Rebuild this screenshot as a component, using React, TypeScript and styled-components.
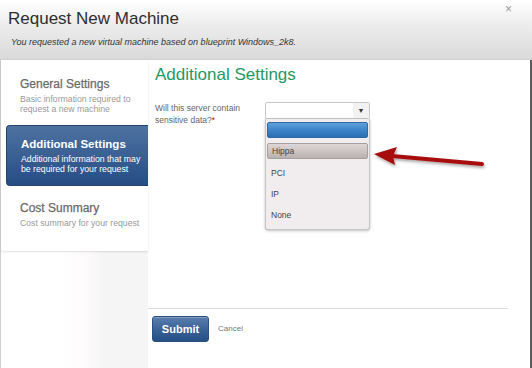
import React from "react";
import styled, { createGlobalStyle } from "styled-components";

const Global = createGlobalStyle`
  html, body { margin: 0; padding: 0; background: #fff; }
  body { font-family: "Liberation Sans", Arial, sans-serif; }
`;

const Dialog = styled.div`
  width: 532px;
  height: 368px;
  display: flex;
  flex-direction: column;
  overflow: hidden;
  background: #fff;
`;

const Header = styled.div`
  position: relative;
  height: 60px;
  box-sizing: border-box;
  padding: 8px 0 0 8px;
  background: linear-gradient(#ffffff 0%, #ececec 45%, #d9d9d9 100%);
  border-bottom: 1px solid #d0d0d0;
`;

const Title = styled.div`
  font-size: 17px;
  color: #2e2e2e;
  line-height: 22px;
`;

const Subtitle = styled.div`
  margin-top: 7px;
  margin-left: 3px;
  font-size: 9px;
  font-style: italic;
  color: #333;
`;

const Close = styled.div`
  position: absolute;
  right: 20px;
  top: 2px;
  font-size: 12px;
  color: #999;
`;

const Body = styled.div`
  flex: 1;
  display: flex;
  border-left: 1px solid #cfcfcf;
  border-right: 2px solid #5a5a5a;
`;

const Sidebar = styled.div`
  width: 147px;
  display: flex;
  flex-direction: column;
  background: linear-gradient(90deg, #ffffff 40%, #fdfafb 60%, #f5f5f5 70%);
  padding-bottom: 17px;
`;

const Steps = styled.div`
  background: #fff;
  padding-top: 2px;
  box-shadow: 0 1px 2px rgba(0, 0, 0, 0.12);
  border-bottom-left-radius: 3px;
  padding-bottom: 2px;
`;

const Step = styled.div<{ $active?: boolean }>`
  box-sizing: border-box;
  margin-left: ${(p) => (p.$active ? "5px" : "0")};
  padding: ${(p) => (p.$active ? "11px 4px 0 14px" : "15px 4px 0 19px")};
  height: ${(p) => (p.$active ? "61px" : "63px")};
  border-radius: ${(p) => (p.$active ? "4px 0 0 4px" : "0")};
  background: ${(p) =>
    p.$active ? "linear-gradient(#4d72a0 0%, #3a6094 50%, #244d85 100%)" : "transparent"};
  border: ${(p) => (p.$active ? "1px solid #22446f" : "none")};
  border-right: none;
  color: ${(p) => (p.$active ? "#fff" : "#6a6a6a")};
`;

const StepTitle = styled.div<{ $active?: boolean }>`
  font-size: ${(p) => (p.$active ? "11.5px" : "12px")};
  font-weight: ${(p) => (p.$active ? "bold" : "normal")};
  line-height: 15px;
  margin-bottom: 2px;
  -webkit-text-stroke: ${(p) => (p.$active ? "0" : "0.25px")};
`;

const StepDesc = styled.div<{ $active?: boolean }>`
  font-size: 8.7px;
  line-height: 10px;
  color: ${(p) => (p.$active ? "#fff" : "#999")};
`;

const Main = styled.div`
  flex: 1;
  display: flex;
  flex-direction: column;
  position: relative;
`;

const Content = styled.div`
  flex: 1;
  padding: 5px 0 0 7px;
`;

const SectionTitle = styled.div`
  font-size: 17px;
  color: #1f9862;
  line-height: 20px;
`;

const FieldRow = styled.div`
  display: flex;
  margin-top: 17px;
`;

const Label = styled.div`
  width: 104px;
  margin-right: 6px;
  font-size: 8.5px;
  line-height: 12px;
  color: #666;
`;

const Req = styled.span`
  color: #d00;
`;

const SelectWrap = styled.div`
  position: relative;
  margin-top: 0;
`;

const SelectBox = styled.div`
  width: 105px;
  height: 17px;
  box-sizing: border-box;
  border: 1px solid #c8c8c8;
  border-radius: 2px;
  background: #fff;
  display: flex;
  justify-content: flex-end;
`;

const Arrow = styled.div`
  width: 16px;
  background: #f2f2f2;
  font-size: 7px;
  color: #333;
  display: flex;
  align-items: center;
  justify-content: center;
`;

const Menu = styled.div`
  position: absolute;
  left: 0;
  top: 17px;
  width: 105px;
  box-sizing: border-box;
  height: 111px;
  background: #f1edef;
  border: 1px solid #c5c5c5;
  border-top: none;
  border-radius: 0 0 3px 3px;
  box-shadow: 0 1px 3px rgba(0, 0, 0, 0.25);
  padding: 3px 1px 0 1px;
`;

const Option = styled.div<{ $kind?: "blue" | "hover" }>`
  box-sizing: border-box;
  height: ${(p) => (p.$kind ? "16px" : "21px")};
  margin-bottom: ${(p) => (p.$kind === "blue" ? "5px" : p.$kind === "hover" ? "3px" : "0")};
  font-size: 8.5px;
  color: #444;
  padding-left: 4px;
  display: flex;
  align-items: center;
  border-radius: 2px;
  background: ${(p) =>
    p.$kind === "blue"
      ? "linear-gradient(#5fa0da 0%, #3a82c6 55%, #2a6fb2 100%)"
      : p.$kind === "hover"
      ? "linear-gradient(#ddd7d5 0%, #c9c1bf 60%, #b9b1af 100%)"
      : "transparent"};
  border: ${(p) =>
    p.$kind === "blue" ? "1px solid #2f6aa8" : p.$kind === "hover" ? "1px solid #a8a09e" : "none"};
`;

const Pointer = styled.svg`
  position: absolute;
  left: 220px;
  top: 79px;
`;

const Divider = styled.div`
  height: 1px;
  background: #dcdcdc;
  margin-right: 22px;
`;

const Footer = styled.div`
  height: 59px;
  display: flex;
  align-items: flex-start;
  padding: 7px 0 0 4px;
  gap: 9px;
  box-sizing: border-box;
`;

const Submit = styled.button`
  width: 57px;
  height: 26px;
  border: 1px solid #2a4f80;
  border-radius: 3px;
  background: linear-gradient(#5a7fae 0%, #3d6398 50%, #244e86 100%);
  color: #fff;
  font-family: "Liberation Sans", Arial, sans-serif;
  font-weight: bold;
  font-size: 11px;
  padding: 0;
  box-shadow: inset 0 1px 0 rgba(255, 255, 255, 0.25);
`;

const Cancel = styled.span`
  font-size: 8px;
  color: #777;
  line-height: 26px;
`;

export default function App() {
  return (
    <>
      <Global />
      <Dialog>
        <Header>
          <Title>Request New Machine</Title>
          <Subtitle>You requested a new virtual machine based on blueprint Windows_2k8.</Subtitle>
          <Close>×</Close>
        </Header>
        <Body>
          <Sidebar>
            <Steps>
              <Step>
                <StepTitle>General Settings</StepTitle>
                <StepDesc>Basic information required to request a new machine</StepDesc>
              </Step>
              <Step $active>
                <StepTitle $active>Additional Settings</StepTitle>
                <StepDesc $active>Additional information that may be required for your request</StepDesc>
              </Step>
              <Step>
                <StepTitle>Cost Summary</StepTitle>
                <StepDesc>Cost summary for your request</StepDesc>
              </Step>
            </Steps>
          </Sidebar>
          <Main>
            <Content>
              <SectionTitle>Additional Settings</SectionTitle>
              <FieldRow>
                <Label>
                  Will this server contain sensitive data?<Req>*</Req>
                </Label>
                <SelectWrap>
                  <SelectBox>
                    <Arrow>▼</Arrow>
                  </SelectBox>
                  <Menu>
                    <Option $kind="blue" />
                    <Option $kind="hover">Hippa</Option>
                    <Option>PCI</Option>
                    <Option>IP</Option>
                    <Option>None</Option>
                  </Menu>
                </SelectWrap>
              </FieldRow>
            </Content>
            <Pointer width="124" height="40" viewBox="0 0 124 40">
              <defs>
                <filter id="sh" x="-20%" y="-50%" width="140%" height="200%">
                  <feDropShadow dx="1" dy="2" stdDeviation="1.5" floodColor="#000" floodOpacity="0.35" />
                </filter>
              </defs>
              <g filter="url(#sh)">
                <line x1="24" y1="17" x2="114" y2="25" stroke="#a80d0d" strokeWidth="4" strokeLinecap="round" />
                <polygon points="6,15 29,8 25,17 27,26" fill="#a80d0d" />
              </g>
            </Pointer>
            <Divider />
            <Footer>
              <Submit>Submit</Submit>
              <Cancel>Cancel</Cancel>
            </Footer>
          </Main>
        </Body>
      </Dialog>
    </>
  );
}
